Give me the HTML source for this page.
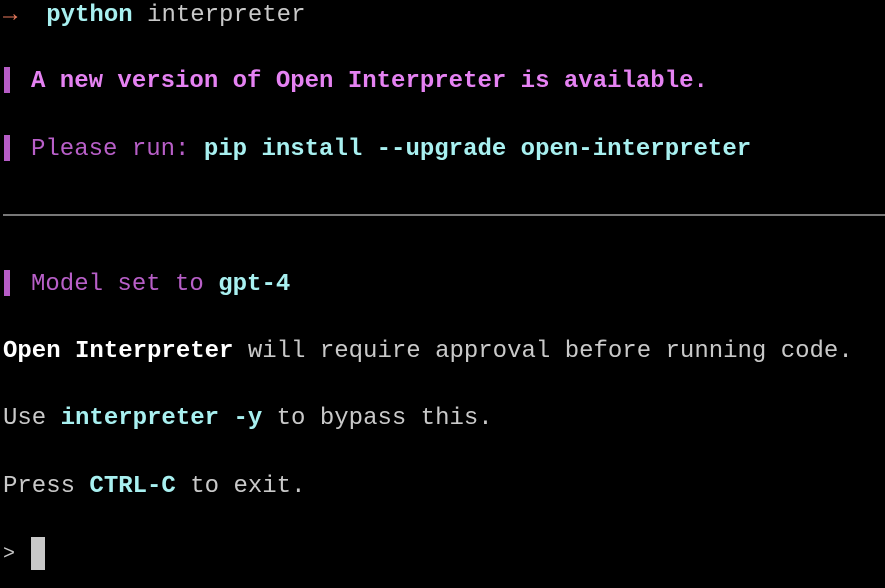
<!DOCTYPE html>
<html><head><meta charset="utf-8"><style>
html,body{margin:0;padding:0;background:#000;width:885px;height:588px;overflow:hidden}
.l{position:absolute;left:3px;font-family:"Liberation Mono","DejaVu Sans Mono",monospace;font-size:24px;line-height:30px;white-space:pre;color:#c9c9c9}
.c{color:#a8f0f0;font-weight:bold}
.m{color:#e582f2;font-weight:bold}
.p{color:#b85fc8}
.w{color:#fff;font-weight:bold}
.bar{position:absolute;left:4px;width:6px;height:26px;background:#b65cc6}
</style></head><body>
<div class="l" style="top:1px"><span style="color:#e8795c;font-weight:bold">→</span>  <span class="c">python</span> interpreter</div>
<div class="bar" style="top:67px"></div>
<div class="l" style="top:67px;left:31px"><span class="m">A new version of Open Interpreter is available.</span></div>
<div class="bar" style="top:135px"></div>
<div class="l" style="top:135px;left:31px"><span class="p">Please run: </span><span class="c">pip install --upgrade open-interpreter</span></div>
<div style="position:absolute;left:3px;right:0;top:214px;height:2px;background:#777"></div>
<div class="bar" style="top:270px"></div>
<div class="l" style="top:270px;left:31px"><span class="p">Model set to </span><span class="c">gpt-4</span></div>
<div class="l" style="top:337px"><span class="w">Open Interpreter</span> will require approval before running code.</div>
<div class="l" style="top:404px">Use <span class="c">interpreter -y</span> to bypass this.</div>
<div class="l" style="top:472px">Press <span class="c">CTRL-C</span> to exit.</div>
<div class="l" style="top:540px;font-size:20px">&gt;</div>
<div style="position:absolute;left:31px;top:537px;width:14px;height:33px;background:#c8c8c8"></div>
</body></html>
